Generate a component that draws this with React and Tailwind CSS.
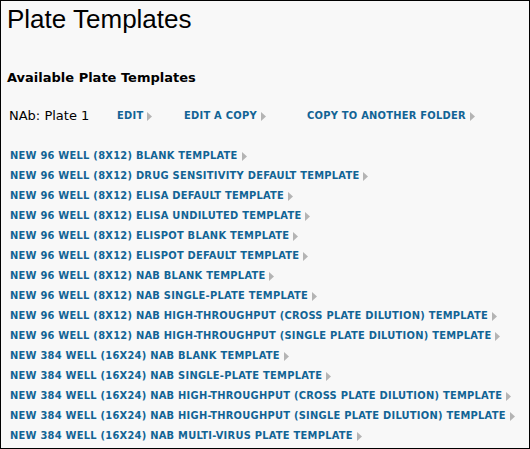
const templates = [
  'New 96 Well (8x12) blank template',
  'New 96 Well (8x12) Drug Sensitivity default template',
  'New 96 Well (8x12) ELISA default template',
  'New 96 Well (8x12) ELISA Undiluted template',
  'New 96 Well (8x12) ELISpot blank template',
  'New 96 Well (8x12) ELISpot default template',
  'New 96 Well (8x12) NAb blank template',
  'New 96 Well (8x12) NAb single-plate template',
  'New 96 Well (8x12) NAb high-throughput (cross plate dilution) template',
  'New 96 Well (8x12) NAb high-throughput (single plate dilution) template',
  'New 384 Well (16x24) NAb blank template',
  'New 384 Well (16x24) NAb single-plate template',
  'New 384 Well (16x24) NAb high-throughput (cross plate dilution) template',
  'New 384 Well (16x24) NAb high-throughput (single plate dilution) template',
  'New 384 Well (16x24) NAb multi-virus plate template',
]

function Arrow() {
  return (
    <svg className="ml-[4px] inline-block shrink-0" width="5" height="9" viewBox="0 0 5 9">
      <path d="M0 0 L5 4.5 L0 9 Z" fill="#b4b4b4" />
    </svg>
  )
}

function LinkText({ children, className = '' }) {
  return (
    <a
      href="#"
      className={`inline-flex items-center whitespace-nowrap text-[11px] font-bold uppercase tracking-[0.25px] text-[#126495] font-['DejaVu_Sans_Condensed',Verdana,sans-serif] ${className}`}
    >
      {children}
      <Arrow />
    </a>
  )
}

export default function App() {
  return (
    <div className="box-border flex h-[449px] w-[530px] flex-col border border-black bg-[#f8f8f8] pt-[3px]">
      <h1 className="ml-[6px] text-[26px] leading-[30px] text-black font-['Liberation_Sans',Arial,sans-serif]">
        Plate Templates
      </h1>
      <h2 className="ml-[6px] mt-[36px] text-[13px] font-bold leading-[16px] text-black font-['DejaVu_Sans',Verdana,sans-serif]">
        Available Plate Templates
      </h2>
      <div className="mt-[20px] flex h-[20px] items-center font-['DejaVu_Sans',Verdana,sans-serif]">
        <span className="ml-[8px] w-[108px] text-[13px] text-black">NAb: Plate 1</span>
        <LinkText className="w-[67px]">Edit</LinkText>
        <LinkText className="w-[123px]">Edit a copy</LinkText>
        <LinkText>Copy to another folder</LinkText>
      </div>
      <ul className="mt-[20px] flex flex-col">
        {templates.map((t) => (
          <li key={t} className="ml-[9px] flex h-[20px] items-center">
            <LinkText>{t}</LinkText>
          </li>
        ))}
      </ul>
    </div>
  )
}
